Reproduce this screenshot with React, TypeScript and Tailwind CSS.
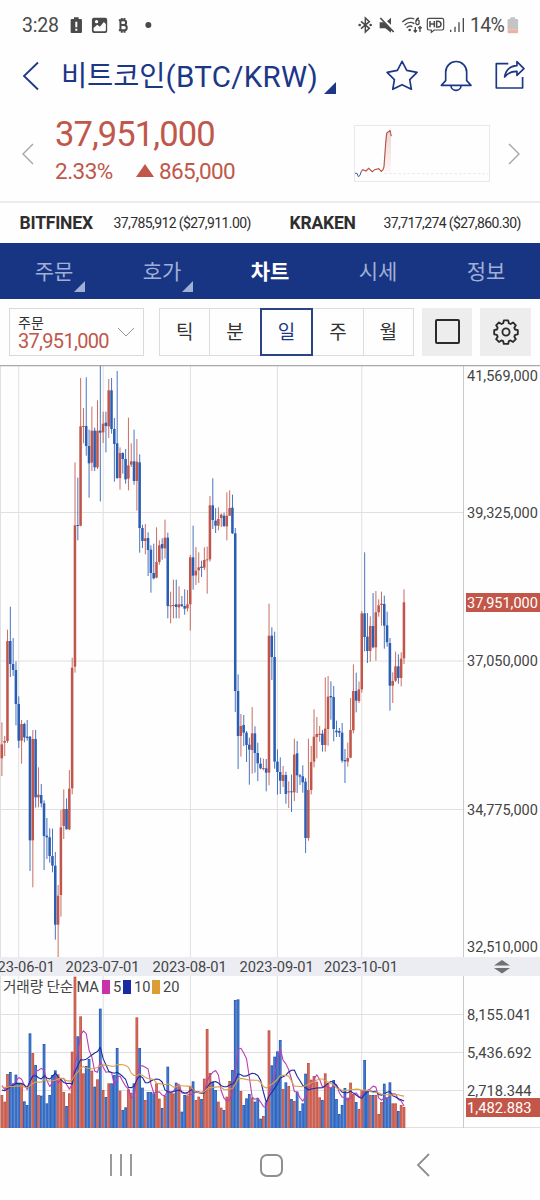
import clsx from 'clsx';

type Dir = 'u' | 'd';
// [direction, high, body top, body bottom, low, volume top]
type Candle = [Dir, number, number, number, number, number];

const PITCH = 8.436;
const FIRST_X = 5.7;
const VOLUME_BASE = 564;

const UP = '#c0564a';
const DOWN = '#2a5db4';

const CANDLES: Candle[] = [
  ['u', 1087, 1153, 1195, 1248, 465],
  ['u', 1128, 1143, 1148, 1188, 485],
  ['u', 809, 843, 1143, 1149, 402],
  ['d', 740, 843, 912, 951, 396],
  ['d', 834, 912, 930, 948, 430],
  ['d', 904, 930, 1032, 1096, 404],
  ['d', 1009, 1032, 1142, 1164, 430],
  ['u', 1080, 1092, 1142, 1211, 430],
  ['d', 1088, 1092, 1132, 1147, 484],
  ['d', 1080, 1130, 1134, 1142, 495],
  ['d', 1128, 1130, 1441, 1533, 280],
  ['u', 1110, 1137, 1441, 1582, 339],
  ['d', 1110, 1137, 1312, 1343, 375],
  ['u', 1222, 1304, 1312, 1342, 465],
  ['d', 1272, 1305, 1330, 1342, 467],
  ['d', 1321, 1330, 1428, 1530, 312],
  ['d', 1374, 1427, 1432, 1497, 490],
  ['d', 1405, 1432, 1488, 1508, 465],
  ['d', 1406, 1488, 1517, 1537, 405],
  ['d', 1476, 1517, 1694, 1739, 391],
  ['u', 1575, 1607, 1694, 1791, 403],
  ['u', 1350, 1402, 1605, 1670, 420],
  ['u', 1288, 1347, 1398, 1437, 456],
  ['d', 1315, 1347, 1408, 1408, 498],
  ['u', 1230, 1286, 1408, 1410, 460],
  ['u', 893, 923, 1285, 1303, 335],
  ['u', 307, 496, 920, 938, 110],
  ['d', 353, 495, 498, 541, 289],
  ['u', 54, 199, 497, 499, 229],
  ['u', 144, 198, 200, 250, 400],
  ['d', 52, 198, 258, 287, 378],
  ['d', 209, 258, 310, 413, 357],
  ['u', 140, 212, 308, 333, 392],
  ['d', 203, 212, 322, 333, 440],
  ['u', 121, 212, 322, 327, 418],
  ['d', 18, 212, 218, 424, 206],
  ['u', 155, 191, 217, 249, 450],
  ['d', 155, 188, 198, 277, 471],
  ['u', 57, 91, 199, 234, 430],
  ['d', 54, 91, 207, 221, 430],
  ['d', 174, 207, 252, 365, 405],
  ['d', 33, 250, 354, 357, 324],
  ['u', 262, 279, 354, 389, 452],
  ['d', 277, 279, 297, 341, 510],
  ['d', 267, 297, 358, 371, 502],
  ['u', 173, 316, 356, 391, 448],
  ['u', 250, 304, 314, 321, 458],
  ['d', 209, 304, 363, 374, 430],
  ['u', 237, 305, 363, 452, 232],
  ['d', 283, 307, 504, 578, 324],
  ['d', 494, 504, 543, 564, 443],
  ['u', 492, 535, 543, 583, 480],
  ['d', 517, 534, 570, 648, 456],
  ['d', 556, 569, 639, 698, 456],
  ['d', 551, 639, 655, 658, 460],
  ['u', 502, 606, 653, 655, 430],
  ['u', 541, 556, 606, 614, 476],
  ['d', 535, 552, 565, 599, 504],
  ['u', 479, 533, 565, 595, 468],
  ['d', 518, 533, 738, 775, 380],
  ['u', 695, 736, 739, 790, 458],
  ['u', 659, 735, 737, 775, 460],
  ['d', 659, 733, 741, 775, 428],
  ['u', 679, 733, 742, 775, 435],
  ['d', 708, 733, 738, 741, 515],
  ['d', 688, 738, 746, 764, 465],
  ['u', 690, 733, 745, 754, 466],
  ['u', 585, 592, 733, 812, 438],
  ['d', 497, 592, 647, 689, 424],
  ['u', 561, 632, 646, 675, 480],
  ['u', 577, 622, 631, 669, 470],
  ['d', 602, 620, 624, 651, 477],
  ['u', 562, 600, 623, 630, 416],
  ['u', 560, 598, 601, 701, 267],
  ['u', 408, 436, 598, 605, 399],
  ['d', 355, 436, 480, 507, 425],
  ['d', 444, 482, 497, 519, 450],
  ['u', 442, 477, 497, 511, 485],
  ['u', 460, 464, 474, 501, 503],
  ['d', 458, 467, 498, 501, 510],
  ['u', 397, 467, 499, 541, 470],
  ['u', 391, 444, 467, 468, 423],
  ['d', 404, 443, 520, 522, 390],
  ['d', 504, 520, 993, 1056, 180],
  ['d', 943, 993, 1128, 1227, 178],
  ['u', 1062, 1098, 1128, 1190, 453],
  ['d', 1065, 1095, 1118, 1158, 495],
  ['d', 1113, 1118, 1155, 1206, 475],
  ['d', 1133, 1154, 1169, 1274, 462],
  ['u', 1041, 1120, 1170, 1241, 473],
  ['d', 1099, 1120, 1179, 1238, 485],
  ['d', 1148, 1179, 1210, 1263, 475],
  ['d', 1193, 1211, 1225, 1228, 536],
  ['u', 1196, 1224, 1227, 1231, 528],
  ['d', 1197, 1225, 1238, 1294, 487],
  ['u', 731, 827, 1238, 1276, 271],
  ['d', 802, 827, 891, 960, 376],
  ['d', 815, 891, 1205, 1226, 350],
  ['d', 1168, 1205, 1236, 1304, 334],
  ['d', 1192, 1236, 1262, 1302, 300],
  ['u', 1218, 1245, 1263, 1281, 447],
  ['d', 1235, 1245, 1302, 1331, 427],
  ['u', 1264, 1294, 1297, 1344, 438],
  ['d', 1244, 1294, 1297, 1356, 477],
  ['u', 1136, 1184, 1297, 1323, 483],
  ['d', 1143, 1180, 1246, 1299, 455],
  ['d', 1242, 1246, 1250, 1275, 513],
  ['d', 1216, 1249, 1267, 1298, 490],
  ['d', 1254, 1265, 1434, 1479, 401],
  ['u', 1136, 1290, 1434, 1442, 369],
  ['u', 1158, 1206, 1290, 1303, 419],
  ['u', 1048, 1130, 1205, 1222, 408],
  ['u', 1071, 1122, 1131, 1195, 425],
  ['u', 1098, 1121, 1125, 1145, 472],
  ['d', 1110, 1121, 1155, 1175, 480],
  ['u', 952, 1106, 1155, 1175, 400],
  ['u', 948, 1010, 1107, 1157, 430],
  ['d', 964, 1008, 1012, 1079, 443],
  ['d', 978, 1011, 1107, 1144, 420],
  ['d', 1082, 1112, 1117, 1131, 477],
  ['d', 1104, 1113, 1118, 1131, 522],
  ['d', 1089, 1118, 1202, 1208, 495],
  ['d', 1167, 1200, 1204, 1269, 444],
  ['u', 1148, 1194, 1205, 1220, 473],
  ['u', 1014, 1110, 1193, 1195, 428],
  ['u', 913, 993, 1111, 1120, 463],
  ['d', 938, 993, 1022, 1057, 486],
  ['u', 965, 988, 1023, 1029, 507],
  ['u', 753, 760, 988, 998, 450],
  ['d', 577, 760, 831, 874, 360],
  ['d', 759, 830, 873, 909, 452],
  ['u', 769, 798, 873, 905, 465],
  ['d', 699, 798, 862, 865, 465],
  ['u', 693, 757, 862, 902, 465],
  ['u', 718, 736, 757, 770, 522],
  ['u', 695, 731, 735, 797, 486],
  ['d', 707, 732, 797, 866, 431],
  ['d', 755, 796, 847, 860, 472],
  ['d', 834, 849, 977, 1052, 427],
  ['u', 937, 963, 977, 1029, 490],
  ['u', 875, 919, 962, 966, 490],
  ['d', 883, 919, 954, 971, 513],
  ['u', 877, 896, 954, 979, 495],
  ['u', 688, 727, 895, 912, 501],
];

// volume before the first visible candle, so the averages start at the left edge
const VOLUME_HISTORY = [
  430, 430, 430, 430, 430, 430, 430, 430, 430, 430, 463, 463, 463, 463, 463, 430, 430, 430, 430,
];

const MONTH_LINES = [18.7, 103.2, 190.4, 277.4, 361.7];
const MONTHS = ['2023-06-01', '2023-07-01', '2023-08-01', '2023-09-01', '2023-10-01'];

const TABS = [
  { label: '주문', menu: true },
  { label: '호가', menu: true },
  { label: '차트', active: true },
  { label: '시세' },
  { label: '정보' },
];

const PERIODS = ['틱', '분', '일', '주', '월'];

const candleX = (i: number) => FIRST_X + i * PITCH;

function movingAverage(span: number) {
  const all = [...VOLUME_HISTORY, ...CANDLES.map((c) => c[5])];
  return CANDLES.map((_, i) => {
    const end = i + VOLUME_HISTORY.length + 1;
    const sum = all.slice(end - span, end).reduce((a, b) => a + b, 0);
    return `${candleX(i).toFixed(1)},${(sum / span).toFixed(1)}`;
  }).join(' ');
}

export default function App() {
  return (
    <div className="flex h-[1200px] w-[540px] flex-col overflow-hidden bg-[#fefefe] font-['Roboto','Noto_Sans_CJK_KR',sans-serif] text-[#333]">
      <StatusBar />
      <TitleBar />
      <PriceSummary />
      <ExchangeTicker />
      <TabBar />
      <Toolbar />
      <PriceChart />
      <VolumeChart />
      <SystemNav />
    </div>
  );
}

function StatusBar() {
  return (
    <div className="flex h-[50px] shrink-0 items-center justify-between pr-[21px] pl-[22px] text-[#4a4a4a]">
      <div className="flex items-center">
        <span className="w-[48px] pt-[2px] text-[19.500px] tracking-[-0.2px]">3:28</span>
        <svg viewBox="210 45 250 60" className="h-[20px] w-[83px]" fill="#4a4a4a">
          <path d="M222 52h14v5h7q3 0 3 3v36q0 3-3 3h-28q-3 0-3-3V60q0-3 3-3h7z" />
          <path d="M226 65h6v17h-6zM226 86h6v6h-6z" fill="#fff" />
          <rect x="276" y="53" width="46" height="46" rx="6" />
          <path d="M281 84l11-10 8 6 12-14 6 6v18q0 4-4 4h-29q-4 0-4-4z" fill="#fff" />
          <circle cx="290" cy="65" r="5" fill="#fff" />
          <path
            d="M357 61h15a7 7 0 0 1 0 14h-9h10a8 8 0 0 1 0 16h-16M362 60v32M366 54v6M374 54v6M366 92v6M374 92v6"
            fill="none"
            stroke="#4a4a4a"
            strokeWidth="6"
          />
          <circle cx="446" cy="75" r="9" />
        </svg>
      </div>
      <div className="flex items-center">
        <svg
          viewBox="252 45 330 60"
          className="h-[20px] w-[110px]"
          fill="none"
          stroke="#4a4a4a"
          strokeWidth="4"
        >
          <path d="M264 64l25 21-12 11V54l12 11-25 21" strokeWidth="4.500" />
          <g fill="#4a4a4a" stroke="none">
            <circle cx="260" cy="75" r="4" />
            <circle cx="293" cy="75" r="4" />
            <path d="M320 67h12l22 20v11l-17-13h-17zM354 53v21l-12-10z" />
          </g>
          <path d="M322 54l40 42" strokeWidth="5" />
          <path d="M388 66q18-17 36-9M395 75q14-13 29-4M401 83q9-8 17-3" />
          <circle cx="410" cy="90" r="4" fill="#4a4a4a" stroke="none" />
          <path d="M427 81v14M422 91l5 5 5-5M441 96V81M436 85l5-5 5 5" />
          <path d="M438 54q-9 2-9 12M429 67a5 5 0 1 0 9 0a5 5 0 1 0-9 0" />
          <path
            d="M468 55h39q5 0 5 5v25q0 5-5 5h-23l-9 7v-7h-7q-5 0-5-5V60q0-5 5-5z"
            strokeWidth="3.500"
          />
          <path d="M471 63v19M484 63v19M471 72h13M491 64v17h5q8 0 8-8t-8-9z" strokeWidth="4.500" />
          <path d="M533 89v7M546 80v16M558 67v29M571 54v42" />
        </svg>
        <span className="ml-[3px] w-[37px] pt-[2px] text-[19.500px] tracking-[-0.7px]">14%</span>
        <svg viewBox="0 0 34 50" className="h-[17px] w-[12px]">
          <path d="M9 1h14v5h6q3 0 3 3v27H1V9q0-3 3-3h5z" fill="#c4c4c4" />
          <path d="M1 36h31v8q0 4-4 4H5q-4 0-4-4z" fill="#ecb3a4" />
        </svg>
      </div>
    </div>
  );
}

function TitleBar() {
  return (
    <div className="flex h-[53px] shrink-0 items-center pr-[13px] pb-[2px] pl-[22px] text-[#1c3786]">
      <svg
        viewBox="0 0 18 30"
        className="h-[30px] w-[18px]"
        fill="none"
        stroke="currentColor"
        strokeWidth="1.800"
      >
        <path d="M16 1.500L2 15l14 13.500" />
      </svg>
      <h1 className="ml-[21px] flex items-center pt-[2px] leading-[40px] whitespace-nowrap">
        <span className="text-[28.500px] tracking-[-0.1px]">비트코인</span>
        <span className="text-[29.500px] tracking-[0.3px]">(BTC/KRW)</span>
      </h1>
      <svg viewBox="0 0 12 12" className="mt-[25px] ml-[6px] size-[12px]" fill="currentColor">
        <path d="M12 0v12H0z" />
      </svg>
      <svg
        viewBox="345 178 425 100"
        className="ml-auto h-[33.300px] w-[141.700px]"
        fill="none"
        stroke="currentColor"
        strokeWidth="5"
        strokeLinejoin="round"
      >
        <path d="M396 185l14 27 31 6-22 22 5 29-28-14-28 14 5-29-22-22 31-6z" />
        <path d="M514 257l13-14v-26a31 31 0 0 1 63 0v26l13 14zM543 258a15 14 0 0 0 30 0" />
        <path d="M715 192h-36v73h79v-33" />
        <path d="M741 186l21 21-21 20v-12q-23-1-37 17q5-32 37-34z" />
      </svg>
    </div>
  );
}

function PriceSummary() {
  return (
    <div className="flex h-[100px] shrink-0 items-center border-b-2 border-[#ececec] pr-[19px] pl-[21px] text-[#c0574b]">
      <Chevron className="mt-[4px] h-[22px] w-[13px]" d="M12 1L2 11l10 10" />
      <div className="ml-[21px] w-[200px] pb-[4px] whitespace-nowrap">
        <div className="h-[41px] pt-px text-[34.500px] leading-[40px] tracking-[-0.9px]">
          37,951,000
        </div>
        <div className="flex h-[34px] items-center text-[22.500px] leading-[34px] tracking-[-0.6px]">
          <span className="w-[81px] tracking-[-0.5px]">2.33%</span>
          <svg viewBox="0 0 18 13" className="mr-[5px] h-[13px] w-[18px]" fill="currentColor">
            <path d="M9 0l9 13H0z" />
          </svg>
          <span>865,000</span>
        </div>
      </div>
      <svg viewBox="253 75 408 171" className="mt-[3px] ml-auto h-[57px] w-[136px]" fill="none">
        <defs>
          <linearGradient id="spark" x1="0" y1="0" x2="0" y2="1">
            <stop offset="0" stopColor="#c0564a" stopOpacity="0.25" />
            <stop offset="1" stopColor="#c0564a" stopOpacity="0.03" />
          </linearGradient>
        </defs>
        <rect x="254.500" y="76.500" width="405" height="168" stroke="#e6e9ec" strokeWidth="3" />
        <path d="M343 205l5-75 2-28 5-7 5-5 4 18v112h-21z" fill="url(#spark)" />
        <path d="M344 221h312" stroke="#dcdcdc" strokeWidth="2" strokeDasharray="8 6" />
        <path d="M256 220h6l4 10 5-4 3-10" stroke="#3f5b9c" strokeWidth="3" />
        <path
          d="M274 216l5-7 10 4 8-8 11 10 7-6 12-3 8 8 5-5 3-9 5-70 3-30 5-5 4-1 1-4 3 16 2 2"
          stroke="#b8544c"
          strokeWidth="3.500"
        />
      </svg>
      <Chevron className="mt-[4px] ml-[18px] h-[22px] w-[13px]" d="M1 1l10 10L1 21" />
    </div>
  );
}

function Chevron({ d, className }: { d: string; className?: string }) {
  return (
    <svg viewBox="0 0 13 22" className={className} fill="none" stroke="#a3a3a3" strokeWidth="1.300">
      <path d={d} />
    </svg>
  );
}

function ExchangeTicker() {
  return (
    <div className="grid h-[40px] shrink-0 grid-cols-2 text-[#2e2e2e]">
      <TickerItem name="BITFINEX" price="37,785,912 ($27,911.00)" />
      <TickerItem name="KRAKEN" price="37,717,274 ($27,860.30)" />
    </div>
  );
}

function TickerItem({ name, price }: { name: string; price: string }) {
  return (
    <div className="flex items-center pl-[19.500px] whitespace-nowrap">
      <span className="w-[94px] text-[17.500px] font-bold tracking-[-0.2px]">{name}</span>
      <span className="text-[14px] tracking-[-0.6px]">{price}</span>
    </div>
  );
}

function TabBar() {
  return (
    <nav className="grid h-[56px] shrink-0 grid-cols-5 bg-[#183583]">
      {TABS.map((tab) => (
        <div
          key={tab.label}
          className={clsx(
            'relative flex items-center justify-center pt-[3px] text-[21px]',
            tab.active ? 'font-bold text-white' : 'text-[#a0afd6]',
          )}
        >
          {tab.label}
          {tab.menu && (
            <svg
              viewBox="0 0 11 11"
              className="absolute right-[23px] bottom-[7px] size-[11px]"
              fill="currentColor"
            >
              <path d="M11 0v11H0z" />
            </svg>
          )}
        </div>
      ))}
    </nav>
  );
}

function Toolbar() {
  return (
    <div className="flex h-[66px] shrink-0 items-center pb-px pl-[9px]">
      <div className="flex h-[48px] w-[135px] items-center border border-[#d9d9d9] pl-[8px]">
        <div className="w-[99px] pt-[2px] whitespace-nowrap">
          <div className="h-[18px] pt-px text-[14px] leading-[18px]">주문</div>
          <div className="text-[20px] leading-[21px] tracking-[-0.7px] text-[#c0574b]">
            37,951,000
          </div>
        </div>
        <svg viewBox="0 0 18 10" className="h-[10px] w-[18px]" fill="none" stroke="#999">
          <path d="M1 1l8 8 8-8" />
        </svg>
      </div>
      <div className="ml-[15px] flex h-[48px] w-[255px]">
        {PERIODS.map((p) => (
          <button
            key={p}
            type="button"
            className={clsx(
              'flex flex-1 items-center justify-center pt-[3px] text-[19px]',
              p === '일'
                ? 'border-2 border-[#2a4384] text-[#1c3786]'
                : 'border-y border-r border-[#dcdcdc] first:border-l',
              p === '분' && 'border-r-0',
            )}
          >
            {p}
          </button>
        ))}
      </div>
      <div className="ml-[8px] flex h-[48px] w-[50px] items-center justify-center bg-[#ededed]">
        <div className="size-[25px] rounded-[2px] border-2 border-[#2b2b2b]" />
      </div>
      <div className="ml-[8px] flex h-[48px] w-[51px] items-center justify-center bg-[#ededed]">
        <svg
          viewBox="0 0 24 24"
          className="size-[26px]"
          fill="none"
          stroke="#2b2b2b"
          strokeWidth="1.700"
          strokeLinejoin="round"
        >
          <path d="M10 1.300h4l.6 2.600 1.600.7 2.300-1.400 2.600 2.600-1.400 2.300.7 1.600 2.500.6v3.800l-2.500.6-.7 1.600 1.400 2.300-2.600 2.600-2.300-1.400-1.600.7-.6 2.500h-4l-.6-2.500-1.600-.7-2.300 1.400-2.600-2.600 1.400-2.300-.7-1.600-2.500-.6v-3.800l2.500-.6.7-1.600-1.400-2.300 2.600-2.600 2.300 1.400 1.600-.7z" />
          <circle cx="12" cy="12" r="3.300" />
        </svg>
      </div>
    </div>
  );
}

function PriceChart() {
  return (
    <div className="shrink-0">
      <svg viewBox="0 365 540 592" className="block h-[592px] w-[540px]">
        <g stroke="#e0e0e0">
          {MONTH_LINES.map((x) => (
            <path key={x} d={`M${x} 366V957`} />
          ))}
          {[512.5, 661, 809.5].map((y) => (
            <path key={y} d={`M0 ${y}H464`} />
          ))}
          <path d="M.5 366V957" />
          <path d="M463.500 366V957" stroke="#c9c9c9" />
        </g>
        <path d="M0 365.700H540" stroke="#a8a8a8" strokeWidth="1.300" />
        <g transform="translate(0 360) scale(0.33333)">
          {CANDLES.map(([dir, high, top, bottom, low], i) => (
            <g key={i} fill={dir === 'u' ? UP : DOWN}>
              <rect x={candleX(i) - 1.5} y={high} width="3" height={low - high} opacity="0.85" />
              <rect x={candleX(i) - 4} y={top} width="7.600" height={Math.max(bottom - top, 3)} />
            </g>
          ))}
        </g>
        <g fontSize="14.500" fill="#444">
          <text x="467" y="381.300">41,569,000</text>
          <text x="467" y="518">39,325,000</text>
          <text x="467" y="666">37,050,000</text>
          <text x="467" y="815">34,775,000</text>
          <text x="467" y="952">32,510,000</text>
          <rect x="466" y="593" width="74" height="19" fill="#c25749" />
          <text x="467" y="608" fill="#fff">37,951,000</text>
        </g>
      </svg>
      <svg viewBox="0 957 540 19" className="block h-[19px] w-[540px]">
        <rect y="957" width="540" height="19" fill="#ecedf3" />
        <g fontSize="14.700" fill="#444" textAnchor="middle">
          {MONTHS.map((m, i) => (
            <text key={m} x={MONTH_LINES[i] - 0.7} y="972">
              {m}
            </text>
          ))}
        </g>
        <path d="M494 965.500l8-5.500 8 5.500zM494 968l8 5.500 8-5.500z" fill="#707070" />
      </svg>
    </div>
  );
}

function VolumeChart() {
  return (
    <div className="relative shrink-0">
      <svg viewBox="0 976 540 152" className="block h-[152px] w-[540px]">
        <g stroke="#e0e0e0">
          {MONTH_LINES.map((x) => (
            <path key={x} d={`M${x} 976V1128`} />
          ))}
          {[1014.5, 1052.5, 1090.5].map((y) => (
            <path key={y} d={`M0 ${y}H464`} />
          ))}
          <path d="M.5 976V1128M0 1127.500H540" />
          <path d="M463.500 976V1128" stroke="#c9c9c9" />
        </g>
        <g transform="translate(0 940) scale(0.33333)">
          {CANDLES.map(([dir, , , , , top], i) => (
            <g key={i}>
              <rect
                x={candleX(i) - 4.2}
                y={top}
                width="8.200"
                height={VOLUME_BASE - top}
                fill={dir === 'u' ? UP : DOWN}
              />
              <rect
                x={candleX(i) - 1.8}
                y={top + 3}
                width="3.600"
                height={VOLUME_BASE - top - 3}
                fill={dir === 'u' ? '#e57a66' : '#5392e8'}
                opacity="0.6"
              />
            </g>
          ))}
          <g fill="none" strokeWidth="3.300" strokeLinejoin="round">
            <polyline points={movingAverage(5)} stroke="#bb3fb4" />
            <polyline points={movingAverage(10)} stroke="#1e2c9c" />
            <polyline points={movingAverage(20)} stroke="#d9a04c" />
          </g>
        </g>
        <g fontSize="14.700" fill="#444">
          <text x="467" y="1019.500">8,155.041</text>
          <text x="467" y="1057.500">5,436.692</text>
          <text x="467" y="1095.500">2,718.344</text>
          <rect x="466" y="1098" width="74" height="19" fill="#c25749" />
          <text x="467" y="1112.500" fill="#fff">1,482.883</text>
        </g>
      </svg>
      <div className="absolute top-0 left-[3px] flex h-[22px] items-center text-[14.700px] whitespace-nowrap text-[#444]">
        <span className="w-[99px] tracking-[-0.2px]">거래량 단순 MA</span>
        <i className="mr-[3px] h-[14px] w-[8px] bg-[#cb2fa9]" />
        <span className="w-[10px]">5</span>
        <i className="mr-[3px] h-[14px] w-[8px] bg-[#1a2aa3]" />
        <span className="w-[18px]">10</span>
        <i className="mr-[3px] h-[14px] w-[8px] bg-[#dd9c34]" />
        <span>20</span>
      </div>
    </div>
  );
}

function SystemNav() {
  return (
    <div className="flex flex-1 items-center pt-[2px] pl-[110px]">
      <svg viewBox="0 0 22 24" className="h-[24px] w-[22px]" stroke="#8f8f8f" strokeWidth="1.800">
        <path d="M1 1v22M11 1v22M21 1v22" />
      </svg>
      <div className="ml-[128px] size-[23px] rounded-[7px] border-2 border-[#8f8f8f]" />
      <svg
        viewBox="0 0 14 24"
        className="ml-[133px] h-[24px] w-[14px]"
        fill="none"
        stroke="#8f8f8f"
        strokeWidth="1.800"
      >
        <path d="M13 1L2 12l11 11" />
      </svg>
    </div>
  );
}
